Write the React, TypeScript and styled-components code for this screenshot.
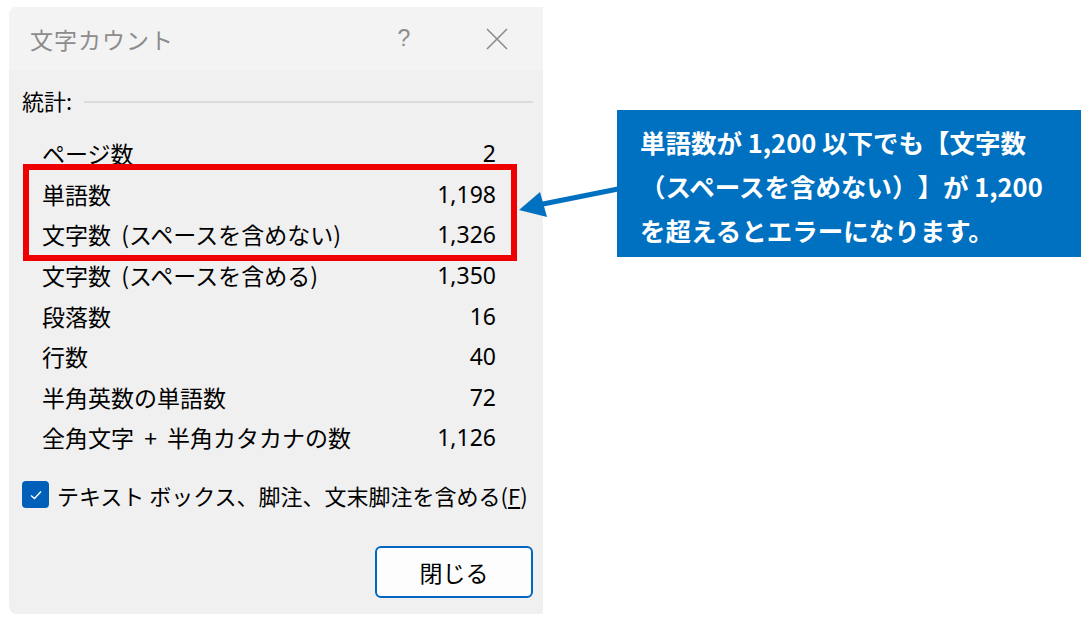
import { ReactElement } from "react";
import styled, { createGlobalStyle } from "styled-components";

const GlobalStyle = createGlobalStyle`
  html, body {
    margin: 0;
    padding: 0;
    background: #ffffff;
  }
  body {
    font-family: "Noto Sans CJK JP", "Noto Sans", sans-serif;
    text-spacing-trim: space-all;
  }
`;

const Stage = styled.div`
  position: relative;
  width: 1089px;
  height: 631px;
  display: flex;
  align-items: flex-start;
`;

const Dialog = styled.div`
  margin: 7px 0 0 9px;
  width: 534px;
  height: 607px;
  background: #f0f0f0;
  border-radius: 8px 0 0 8px;
  overflow: hidden;
  display: flex;
  flex-direction: column;
`;

const TitleBar = styled.div`
  height: 63px;
  flex: none;
  background: #f3f3f3;
  display: flex;
  align-items: center;
  padding: 0 0 0 21px;
`;

const Title = styled.div`
  flex: 1;
  font-size: 23px;
  color: #8c8c8c;
  letter-spacing: 1px;
`;

const Help = styled.div`
  width: 30px;
  font-family: "Liberation Sans", sans-serif;
  font-size: 23px;
  color: #8c8c8c;
  text-align: center;
  margin-right: 66px;
`;

const Close = styled.div`
  width: 24px;
  height: 24px;
  margin-right: 34px;
  display: flex;
`;

const Body = styled.div`
  flex: 1;
  display: flex;
  flex-direction: column;
  padding: 15px 10px 16px 13px;
`;

const Section = styled.div`
  height: 30px;
  display: flex;
  align-items: center;
  gap: 12px;
  font-size: 22px;
  color: #000;
`;

const Rule = styled.div`
  flex: 1;
  height: 2px;
  background: #dcdcdc;
  margin-top: 4px;
`;

const Stats = styled.div`
  margin-top: 18px;
  padding: 0 37px 0 20px;
  display: flex;
  flex-direction: column;
`;

const Row = styled.div`
  height: 40.6px;
  display: flex;
  align-items: center;
  justify-content: space-between;
  font-size: 23px;
  word-spacing: 5px;
  color: #000;
  white-space: nowrap;
`;

const Value = styled.span`
  font-family: "Noto Sans", sans-serif;
  font-size: 23px;
`;

const Highlight = styled.div`
  border: 6px solid #ee0000;
  margin: -10px -21px -6px -19px;
  padding: 4px 15px 0 13px;
  display: flex;
  flex-direction: column;
`;

const CheckRow = styled.label`
  margin-top: 22px;
  height: 30px;
  display: flex;
  align-items: center;
  gap: 8px;
  font-size: 22px;
  color: #000;
  white-space: nowrap;
`;

const CheckBox = styled.span`
  width: 27px;
  height: 27px;
  border-radius: 4px;
  background: #005fb8;
  display: flex;
  align-items: center;
  justify-content: center;
  flex: none;
`;

const Accel = styled.span`
  text-decoration: underline;
  text-underline-offset: 2px;
`;

const Footer = styled.div`
  margin-top: auto;
  display: flex;
  justify-content: flex-end;
`;

const Button = styled.button`
  width: 158px;
  height: 52px;
  border: 2px solid #0067c0;
  border-radius: 6px;
  background: #fdfdfd;
  font-family: "Noto Sans CJK JP", sans-serif;
  font-size: 23px;
  color: #000;
  padding: 0;
`;

const Callout = styled.div`
  margin: 110px 0 0 74px;
  width: 441px;
  height: 137px;
  background: #0070c0;
  color: #ffffff;
  font-weight: 700;
  font-size: 25.5px;
  line-height: 44px;
  padding: 10px 0 0 23px;
  white-space: nowrap;
`;

const Arrow = styled.svg`
  position: absolute;
  left: 0;
  top: 0;
  pointer-events: none;
`;

const stats: [string, string][] = [
  ["ページ数", "2"],
  ["単語数", "1,198"],
  ["文字数 (スペースを含めない)", "1,326"],
  ["文字数 (スペースを含める)", "1,350"],
  ["段落数", "16"],
  ["行数", "40"],
  ["半角英数の単語数", "72"],
  ["全角文字 + 半角カタカナの数", "1,126"],
];

function StatRow({ label, value }: { label: string; value: string }): ReactElement {
  return (
    <Row>
      <span>{label}</span>
      <Value>{value}</Value>
    </Row>
  );
}

export default function App(): ReactElement {
  return (
    <>
      <GlobalStyle />
      <Stage>
        <Dialog>
          <TitleBar>
            <Title>文字カウント</Title>
            <Help>?</Help>
            <Close>
              <svg width="24" height="24" viewBox="0 0 24 24">
                <path d="M2 2 L22 22 M22 2 L2 22" stroke="#8c8c8c" strokeWidth="1.6" />
              </svg>
            </Close>
          </TitleBar>
          <Body>
            <Section>
              <span>統計:</span>
              <Rule />
            </Section>
            <Stats>
              <StatRow label={stats[0][0]} value={stats[0][1]} />
              <Highlight>
                <StatRow label={stats[1][0]} value={stats[1][1]} />
                <StatRow label={stats[2][0]} value={stats[2][1]} />
              </Highlight>
              {stats.slice(3).map(([l, v]) => (
                <StatRow key={l} label={l} value={v} />
              ))}
            </Stats>
            <CheckRow>
              <CheckBox>
                <svg width="16" height="16" viewBox="0 0 16 16">
                  <path d="M3 8.5 L6.5 11.5 L13 4.5" fill="none" stroke="#ffffff" strokeWidth="1.4" />
                </svg>
              </CheckBox>
              <span>
                テキスト ボックス、脚注、文末脚注を含める(<Accel>F</Accel>)
              </span>
            </CheckRow>
            <Footer>
              <Button>閉じる</Button>
            </Footer>
          </Body>
        </Dialog>
        <Callout>
          単語数が 1,200 以下でも【文字数
          <br />
          （スペースを含めない）】が 1,200
          <br />
          を超えるとエラーになります。
        </Callout>
        <Arrow width="1089" height="631" viewBox="0 0 1089 631">
          <line x1="618" y1="189" x2="538" y2="205" stroke="#0070c0" strokeWidth="5" />
          <polygon points="519,210 540,192 547,217" fill="#0070c0" />
        </Arrow>
      </Stage>
    </>
  );
}
